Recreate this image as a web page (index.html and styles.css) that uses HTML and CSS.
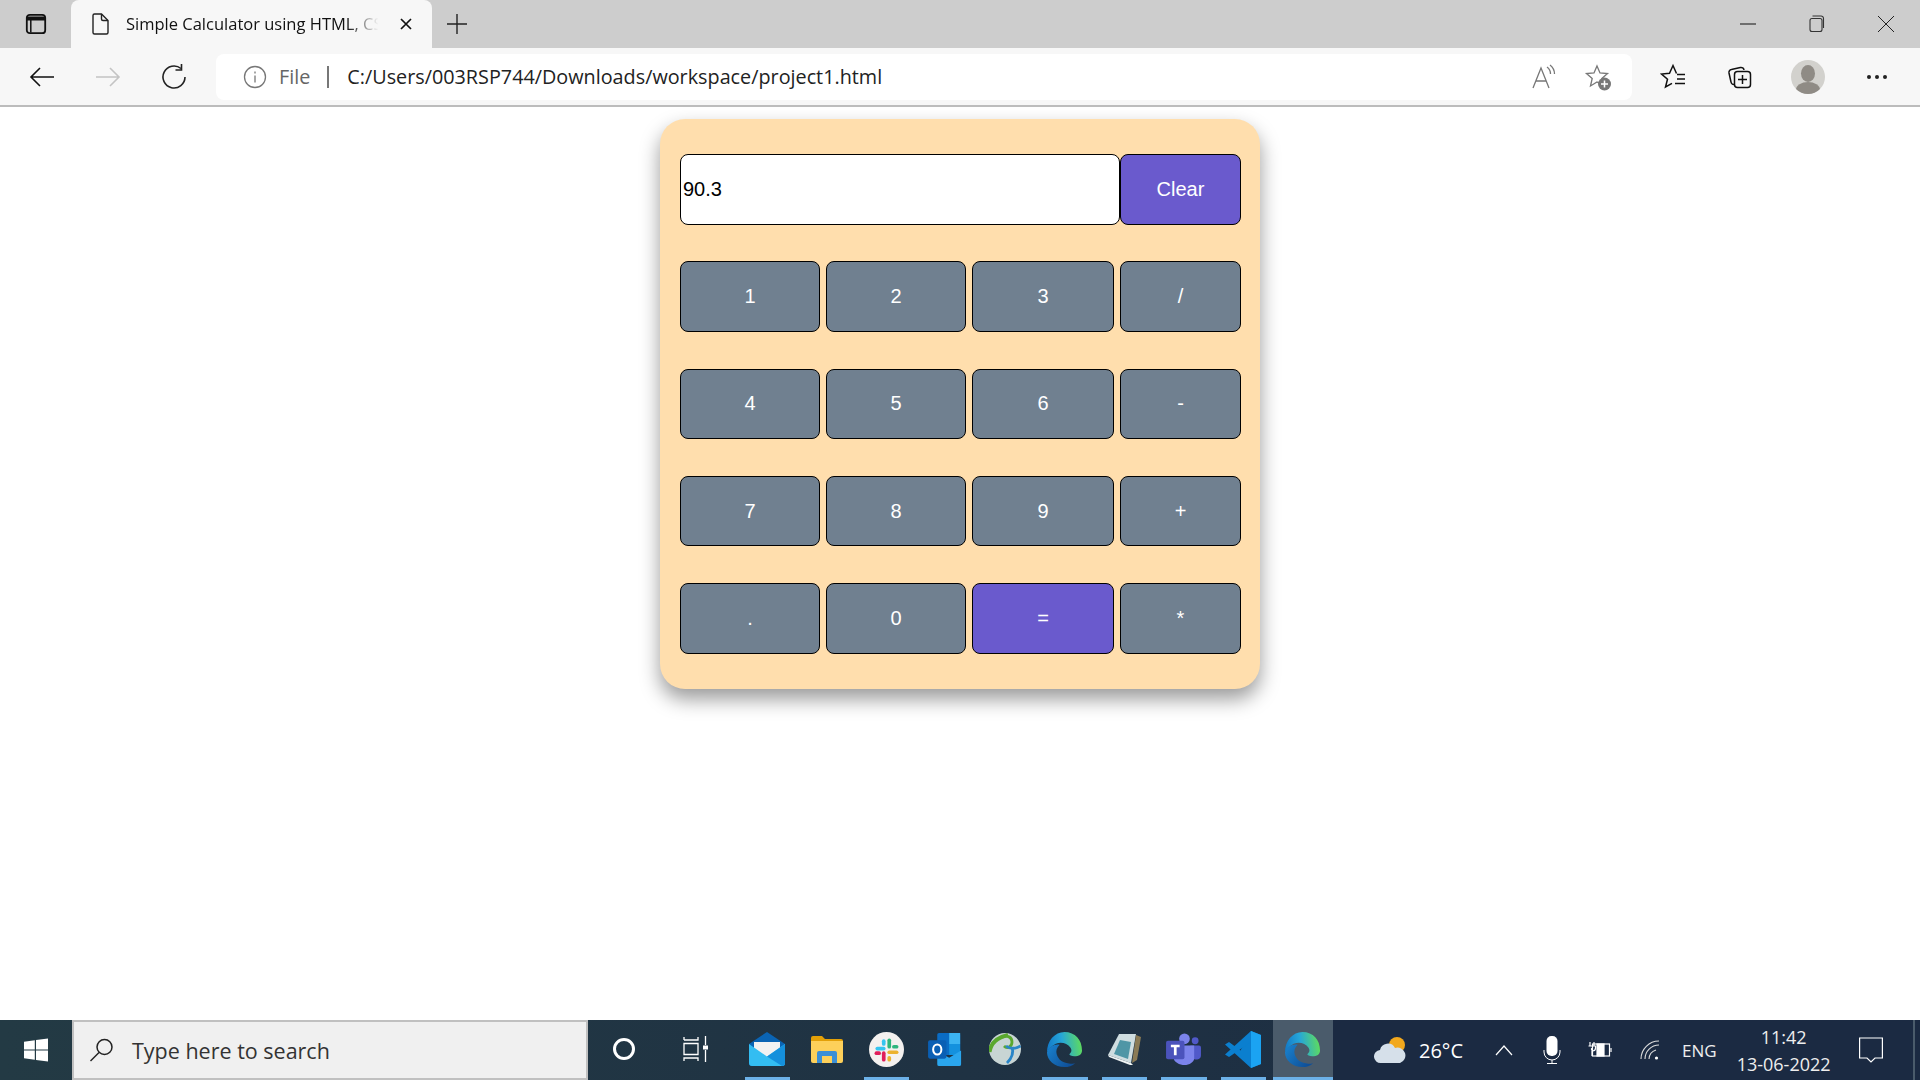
FILE: index.html
```html
<!DOCTYPE html>
<html lang="en">
<head>
    <meta charset="UTF-8">
    <meta name="viewport" content="width=device-width, initial-scale=1.0">
    <title>Simple Calculator using HTML, CSS</title>
    <link rel="stylesheet" href="styles.css">
</head>
<body>
    <svg class="defs" width="0" height="0">
        <defs>
            <linearGradient id="edgeTop" x1="0" y1="0.6" x2="1" y2="0.5">
                <stop offset="0" stop-color="#1279c8"/>
                <stop offset="0.45" stop-color="#26a6d8"/>
                <stop offset="1" stop-color="#5fdc5c"/>
            </linearGradient>
            <linearGradient id="edgeLow" x1="0" y1="0" x2="1" y2="0.6">
                <stop offset="0" stop-color="#1a84d0"/>
                <stop offset="1" stop-color="#0f4f98"/>
            </linearGradient>
        </defs>
    </svg>

    <div class="tabstrip">
        <div class="strip-btn">
            <svg width="24" height="24" viewBox="0 0 24 24" fill="none" stroke="#111" stroke-width="1.800"><rect x="2.800" y="2.800" width="18.400" height="18.400" rx="3"/><path d="M3 6.500h18" stroke-width="4"/><path d="M6.800 8v12.500" stroke-width="1.500"/></svg>
        </div>
        <div class="tab">
            <svg width="20" height="24" viewBox="0 0 20 24" fill="none" stroke="#222" stroke-width="1.400"><path d="M3 3.500a1.500 1.500 0 0 1 1.500-1.500h7L18 8.500v12a1.500 1.500 0 0 1-1.500 1.500h-12A1.500 1.500 0 0 1 3 20.500z"/><path d="M11.500 2v5a1.500 1.500 0 0 0 1.500 1.500h5"/></svg>
            <span class="tab-title">Simple Calculator using HTML, CSS</span>
            <svg class="tab-close" width="14" height="14" viewBox="0 0 14 14" stroke="#111" stroke-width="1.700"><path d="M2 2l10 10M12 2L2 12"/></svg>
        </div>
        <div class="strip-btn new-tab">
            <svg width="22" height="22" viewBox="0 0 22 22" stroke="#222" stroke-width="1.400"><path d="M11 1v20M1 11h20"/></svg>
        </div>
        <div class="window-btns">
            <svg width="16" height="16" viewBox="0 0 16 16" stroke="#222" stroke-width="1.100"><path d="M0 8h16"/></svg>
            <svg width="16" height="18" viewBox="0 0 16 18" fill="none" stroke="#333" stroke-width="1.100"><rect x="1" y="3.500" width="12" height="13" rx="2"/><path d="M3.500 1h8.500a2.500 2.500 0 0 1 2.500 2.500V13"/></svg>
            <svg width="16" height="16" viewBox="0 0 16 16" stroke="#222" stroke-width="1"><path d="M0 0l16 16M16 0L0 16"/></svg>
        </div>
    </div>

    <div class="toolbar">
        <svg class="nav-icon" width="28" height="24" viewBox="0 0 28 24" fill="none" stroke="#111" stroke-width="1.600"><path d="M26 12H3M12 3l-9 9 9 9"/></svg>
        <svg class="nav-icon" width="28" height="24" viewBox="0 0 28 24" fill="none" stroke="#c4c4c4" stroke-width="1.600"><path d="M2 12h23M16 3l9 9-9 9"/></svg>
        <svg class="nav-icon" width="28" height="28" viewBox="0 0 28 28" fill="none" stroke="#222" stroke-width="1.600"><path d="M21 5.500A11 11 0 1 0 25 14"/><path d="M21.500 1v6h-6"/></svg>
        <div class="address">
            <svg width="24" height="24" viewBox="0 0 24 24" fill="none" stroke="#777" stroke-width="1.300"><circle cx="12" cy="12" r="10.500"/><path d="M12 10.500v7M12 6.500v2"/></svg>
            <span class="addr-file">File</span>
            <span class="addr-sep"></span>
            <span class="addr-url">C:/Users/003RSP744/Downloads/workspace/project1.html</span>
            <svg class="addr-read" width="26" height="26" viewBox="0 0 26 26" fill="none" stroke="#777" stroke-width="1.300"><path d="M2 24L10 4l8 20M5 17h10"/><path d="M16 3q3.500 2.500 3.500 7M19 1q4.500 3.500 4.500 9"/></svg>
            <svg class="addr-fav" width="28" height="28" viewBox="0 0 28 28"><path d="M13 3l3 7 7.500.600-5.700 4.900 1.700 7.300L13 19l-6.500 4 1.700-7.500L2.500 10.600l7.500-.600z" fill="none" stroke="#777" stroke-width="1.300"/><circle cx="20.500" cy="21" r="6.500" fill="#777"/><path d="M20.500 17.500v7M17 21h7" stroke="#fff" stroke-width="1.500"/></svg>
        </div>
        <svg class="tool-icon" width="28" height="28" viewBox="0 0 28 28" fill="none" stroke="#111" stroke-width="1.500"><path d="M16.500 10.500L13 2.500l-3.500 7.700-8 .800 6 5.300L5.500 24l6.500-3.700"/><path d="M17 11.500h8M17 16h8M15 20.500h10"/></svg>
        <svg class="tool-icon" width="28" height="28" viewBox="0 0 28 28" fill="none" stroke="#111" stroke-width="1.500"><path d="M8 21.500A3 3 0 0 1 5 19l-2-9a3 3 0 0 1 2.400-3.500l9-2A3 3 0 0 1 18 7"/><rect x="8.500" y="8.500" width="16" height="16" rx="3"/><path d="M16.500 12v9M12 16.500h9"/></svg>
        <div class="avatar"><span class="avatar-head"></span><span class="avatar-body"></span></div>
        <div class="dots"><span></span><span></span><span></span></div>
    </div>

    <main class="page">
        <div class="calculator">
            <div class="display-row">
                <input class="display" type="text" value="90.3">
                <button class="key key-accent key-clear">Clear</button>
            </div>
            <div class="keypad">
                <button class="key">1</button>
                <button class="key">2</button>
                <button class="key">3</button>
                <button class="key">/</button>
                <button class="key">4</button>
                <button class="key">5</button>
                <button class="key">6</button>
                <button class="key">-</button>
                <button class="key">7</button>
                <button class="key">8</button>
                <button class="key">9</button>
                <button class="key">+</button>
                <button class="key">.</button>
                <button class="key">0</button>
                <button class="key key-accent">=</button>
                <button class="key">*</button>
            </div>
        </div>
    </main>

    <div class="taskbar">
        <div class="start">
            <svg width="24" height="24" viewBox="0 0 24 24" fill="#fff"><path d="M0 3.800l10.800-1.500v9.100H0zM12 2.100L24 .400v11H12zM0 12.600h10.800v9.100L0 20.200zM12 12.600h12v11l-12-1.700z"/></svg>
        </div>
        <div class="search">
            <svg width="26" height="26" viewBox="0 0 26 26" fill="none" stroke="#222" stroke-width="1.500"><circle cx="15.500" cy="10" r="7.500"/><path d="M10 15.500L1.500 24"/></svg>
            <span>Type here to search</span>
        </div>
        <div class="slot slot-cortana">
            <svg width="24" height="24" viewBox="0 0 24 24" fill="none" stroke="#fff" stroke-width="3"><circle cx="12" cy="12" r="9.500"/></svg>
        </div>
        <div class="slot slot-tasks">
            <svg width="26" height="26" viewBox="0 0 26 26" fill="none" stroke="#fff" stroke-width="1.300"><path d="M1 4h14V1M1 4V1M1 7.500h14v11H1zM1 25v-3h14v3M22.500 0v9M22.500 14v12"/><rect x="20" y="9.500" width="5" height="4" fill="#fff" stroke="none"/></svg>
        </div>

        <div class="slot pinned">
            <svg width="36" height="34" viewBox="0 0 36 34"><path d="M0 12L18 0l18 12v19a3 3 0 0 1-3 3H3a3 3 0 0 1-3-3z" fill="#0a64b4"/><path d="M5 10h26v10l-13 6-13-6z" fill="#f2f2f2"/><path d="M0 12l18 12.500L36 12v19a3 3 0 0 1-3 3H3a3 3 0 0 1-3-3z" fill="#33bdf2"/><path d="M36 31V12L18 24.500 33 34a3 3 0 0 0 3-3z" fill="#1590dc"/></svg>
        </div>
        <div class="slot">
            <svg width="32" height="27" viewBox="0 0 32 27"><path d="M0 2a2 2 0 0 1 2-2h9l3 3h16a2 2 0 0 1 2 2v3H0z" fill="#e3a008"/><path d="M0 5h32v20a2 2 0 0 1-2 2H2a2 2 0 0 1-2-2z" fill="#fdd05a"/><path d="M6 27V17a2 2 0 0 1 2-2h16a2 2 0 0 1 2 2v10h-5v-7H11v7z" fill="#3b8fd6"/></svg>
        </div>
        <div class="slot pinned">
            <svg width="35" height="35" viewBox="0 0 38 38"><circle cx="19" cy="19" r="19" fill="#f4f1ef"/><rect x="7" y="16" width="11" height="4" rx="2" fill="#36c5f0"/><rect x="14" y="8" width="4" height="7" rx="2" fill="#36c5f0"/><rect x="20" y="7" width="4" height="11" rx="2" fill="#2eb67d"/><rect x="25" y="14" width="7" height="4" rx="2" fill="#2eb67d"/><rect x="20" y="20" width="12" height="4" rx="2" fill="#ecb22e"/><rect x="20" y="26" width="4" height="6" rx="2" fill="#ecb22e"/><rect x="14" y="21" width="4" height="11" rx="2" fill="#e01e5a"/><rect x="6" y="21" width="7" height="4" rx="2" fill="#e01e5a"/></svg>
        </div>
        <div class="slot">
            <svg width="35" height="33" viewBox="0 0 38 36"><rect x="10" y="0" width="25" height="24" rx="2" fill="#0a6cc4"/><rect x="23" y="0" width="12" height="12" fill="#3cb4f2"/><rect x="23" y="12" width="12" height="12" fill="#1491de"/><path d="M10 20l13 7 13-8v15a2 2 0 0 1-2 2H12a2 2 0 0 1-2-2z" fill="#2aa6ee"/><rect x="0" y="8" width="20" height="20" rx="2" fill="#0a5fb4"/><ellipse cx="10" cy="18" rx="4.500" ry="5.500" fill="none" stroke="#fff" stroke-width="2.200"/></svg>
        </div>
        <div class="slot">
            <svg width="32" height="32" viewBox="0 0 32 32"><circle cx="16" cy="16" r="16" fill="#c8d5d4"/><path d="M.500 19C2 9 10 4 19 2" fill="none" stroke="#5aa82f" stroke-width="4"/><path d="M14 4c4-2 9 0 9 5 0 5-5 7-8 4" fill="none" stroke="#5aa82f" stroke-width="2.800"/><path d="M17 13c5 4 11 2 14.500 0" fill="none" stroke="#2a86c8" stroke-width="2.800"/><path d="M23 14c2 6-1 12-5 16" fill="none" stroke="#2a86c8" stroke-width="2.800"/></svg>
        </div>
        <div class="slot pinned">
            <svg width="37" height="37" viewBox="0 0 38 38"><path d="M19 1c11 0 18 8 18 19 0 4-3 6-8 6-3 0-5-1-5-2 2-2 3-4 1-7C22 12 15 11 10 13c-4 2-7 5-9 9C1 10 9 1 19 1z" fill="url(#edgeTop)"/><path d="M1 22c2-6 8-9 13-8-3 3-4 6-3 10 2 7 9 11 19 9-3 3-7 4-11 4C9 37 1 30 1 22z" fill="url(#edgeLow)"/></svg>
        </div>
        <div class="slot pinned">
            <svg width="33" height="31" viewBox="0 0 33 31"><path d="M11 0h17l-5 29L0 21z" fill="#cfdde0"/><path d="M28 1l5 2-4 23-5 3z" fill="#8a7a55"/><path d="M6 20l6-14 11 2-3 17z" fill="#4f96a6"/><path d="M0 21l23 8 2 2-3 0L1 23z" fill="#f0f4f4"/></svg>
        </div>
        <div class="slot pinned">
            <svg width="35" height="32" viewBox="0 0 36 33"><circle cx="19" cy="6" r="5.500" fill="#7b83eb"/><circle cx="30" cy="8" r="3.500" fill="#5059c9"/><path d="M25 13h9a2 2 0 0 1 2 2v8c0 4-4 5-7 4l-4-3z" fill="#5059c9"/><path d="M8 13h21v13c0 4-5 7-10 7S8 30 8 26z" fill="#7b83eb"/><rect x="0" y="8" width="19" height="19" rx="2" fill="#4b53bc"/><path d="M5 12h9v2.600h-3.100V23H8.100v-8.400H5z" fill="#fff"/></svg>
        </div>
        <div class="slot pinned">
            <svg width="36" height="37" viewBox="0 0 36 37"><path d="M26 0L36 4v29l-10 4L0 13.500 4 11l11.500 8.500z" fill="#0b7fcf"/><path d="M0 23.500L4 26l22-15V0z" fill="#0b7fcf"/><path d="M26 0v37l10-4V4z" fill="#1ba3f2"/></svg>
        </div>
        <div class="slot slot-active pinned">
            <svg width="37" height="37" viewBox="0 0 38 38"><path d="M19 1c11 0 18 8 18 19 0 4-3 6-8 6-3 0-5-1-5-2 2-2 3-4 1-7C22 12 15 11 10 13c-4 2-7 5-9 9C1 10 9 1 19 1z" fill="url(#edgeTop)"/><path d="M1 22c2-6 8-9 13-8-3 3-4 6-3 10 2 7 9 11 19 9-3 3-7 4-11 4C9 37 1 30 1 22z" fill="url(#edgeLow)"/></svg>
        </div>

        <div class="tray">
            <div class="weather">
                <svg width="32" height="28" viewBox="0 0 32 28"><circle cx="23" cy="9" r="8" fill="#f2a81d"/><path d="M7 27a6.500 6.500 0 0 1-1-13 8 8 0 0 1 15-2 7 7 0 0 1 5 15z" fill="#d6e0ea"/></svg>
                <span>26°C</span>
            </div>
            <svg class="tray-chevron" width="18" height="12" viewBox="0 0 18 12" fill="none" stroke="#fff" stroke-width="1.200"><path d="M1 11l8-9 8 9"/></svg>
            <svg class="tray-mic" width="18" height="28" viewBox="0 0 18 28" fill="#fff"><rect x="3.500" y="0" width="11" height="20" rx="5"/><path d="M1 14v2a8 8 0 0 0 16 0v-2M9 24v3M4 27.500h10" fill="none" stroke="#fff" stroke-width="1"/></svg>
            <svg class="tray-battery" width="24" height="18" viewBox="0 0 24 18" fill="none" stroke="#fff" stroke-width="1.200"><rect x="4.500" y="3" width="17" height="12"/><rect x="9" y="3" width="7" height="12" fill="#fff"/><path d="M23 7v4"/><path d="M2 1v4M6 1v4M.500 5h7v2a3 3 0 0 1-3 3 3 3 0 0 1-1-3M4 10v5"/></svg>
            <svg class="tray-wifi" width="20" height="20" viewBox="0 0 20 20" fill="none" stroke="#ddd" stroke-width="1.100"><path d="M1 19A18 18 0 0 1 19 1M5 19A14 14 0 0 1 19 5M9 19A10 10 0 0 1 16 10"/><circle cx="16.500" cy="18" r="1.600" fill="#fff" stroke="none"/></svg>
            <span class="tray-lang">ENG</span>
            <div class="clock">
                <span>11:42</span>
                <span>13-06-2022</span>
            </div>
            <svg class="tray-notify" width="24" height="26" viewBox="0 0 24 26" fill="none" stroke="#fff" stroke-width="1.200"><path d="M.600 1h22.800v20H16l-4 4-4-4H.600z"/></svg>
            <div class="show-desktop"></div>
        </div>
    </div>
</body>
</html>
```

FILE: styles.css
```css
* {
    box-sizing: border-box;
}

body {
    margin: 0;
    height: 100vh;
    display: flex;
    flex-direction: column;
    overflow: hidden;
    background-color: #fff;
    font-family: "Open Sans", sans-serif;
    color: #111;
}

.defs {
    display: block;
    flex: none;
}

/* browser chrome */
.tabstrip {
    height: 48px;
    flex: none;
    display: flex;
    align-items: center;
    background-color: #cdcdcd;
}

.strip-btn {
    width: 71px;
    height: 48px;
    display: flex;
    align-items: center;
    justify-content: center;
}

.new-tab {
    width: 50px;
    margin-left: 0;
}

.tab {
    width: 361px;
    height: 48px;
    display: flex;
    align-items: center;
    padding: 0 19px 0 19px;
    background-color: #f7f7f7;
    border-radius: 8px 8px 0 0;
}

.tab-title {
    flex: 1;
    margin-left: 16px;
    padding-bottom: 2px;
    font-size: 16.500px;
    white-space: nowrap;
    overflow: hidden;
    -webkit-mask-image: linear-gradient(to right, #000 84%, transparent 96%);
    mask-image: linear-gradient(to right, #000 84%, transparent 96%);
}

.tab-close {
    margin-left: 10px;
    flex: none;
}

.window-btns {
    margin-left: auto;
    display: flex;
    align-items: center;
    gap: 53px;
    padding-right: 26px;
}

.toolbar {
    height: 59px;
    flex: none;
    display: flex;
    align-items: center;
    padding-left: 28px;
    background-color: #f7f7f7;
    border-bottom: 2px solid #bcbcbc;
}

.nav-icon {
    flex: none;
    margin-right: 38px;
}

.nav-icon:nth-child(3) {
    margin-right: 28px;
}

.address {
    width: 1416px;
    height: 46px;
    flex: none;
    display: flex;
    align-items: center;
    padding: 0 20px 0 27px;
    background-color: #fff;
    border-radius: 8px;
}

.addr-file {
    margin-left: 12px;
    font-size: 19.800px;
    color: #666;
}

.addr-sep {
    width: 2px;
    height: 22px;
    margin: 0 18px 0 17px;
    background-color: #777;
}

.addr-url {
    font-size: 19.800px;
    color: #222;
}

.addr-read {
    margin-left: auto;
}

.addr-fav {
    margin-left: 27px;
}

.tool-icon {
    flex: none;
    margin-left: 28px;
}

.tool-icon + .tool-icon {
    margin-left: 38px;
}

.avatar {
    position: relative;
    width: 34px;
    height: 34px;
    flex: none;
    margin-left: 37px;
    overflow: hidden;
    border-radius: 50%;
    background-color: #d2d1cd;
}

.avatar-head {
    position: absolute;
    left: 10px;
    top: 5px;
    width: 14px;
    height: 17px;
    border-radius: 50%;
    background-color: #8f8b85;
}

.avatar-body {
    position: absolute;
    left: 5px;
    top: 22px;
    width: 24px;
    height: 16px;
    border-radius: 50%;
    background-color: #8f8b85;
}

.dots {
    display: flex;
    gap: 4px;
    margin-left: 42px;
}

.dots span {
    width: 4px;
    height: 4px;
    border-radius: 50%;
    background-color: #222;
}

/* calculator */
.page {
    flex: 1;
    display: flex;
    justify-content: center;
    align-items: flex-start;
    padding-top: 12px;
    background-color: #fff;
}

.calculator {
    width: 600px;
    height: 570px;
    padding: 35px 20px;
    background-color: #ffdead;
    border-radius: 25px;
    box-shadow: 0 10px 20px rgba(0, 0, 0, 0.4);
}

.display-row {
    display: flex;
    height: 70.500px;
    margin-bottom: 36.800px;
}

.display {
    width: 440px;
    height: 70.500px;
    flex: none;
    padding: 0 2px;
    font-family: "Liberation Sans", Arial, sans-serif;
    font-size: 20px;
    color: #000;
    background-color: #fff;
    border: 1px solid #000;
    border-radius: 8px;
    outline: none;
}

.keypad {
    display: grid;
    grid-template-columns: 140px 140px 142px 121px;
    grid-auto-rows: 70.500px;
    column-gap: 6px;
    row-gap: 36.800px;
}

.key {
    padding: 0;
    font-family: "Liberation Sans", Arial, sans-serif;
    font-size: 20px;
    color: #fff;
    background-color: #708090;
    border: 1px solid #000;
    border-radius: 8px;
}

.key-accent {
    background-color: #6a5acd;
}

.key-clear {
    width: 121px;
    flex: none;
}

/* windows taskbar */
.taskbar {
    height: 60px;
    flex: none;
    display: flex;
    align-items: stretch;
    background: linear-gradient(to right, #233a44, #1b2a42);
    color: #fff;
}

.start {
    width: 72px;
    display: flex;
    align-items: center;
    justify-content: center;
}

.search {
    width: 516px;
    display: flex;
    align-items: center;
    gap: 17px;
    padding-left: 15px;
    font-size: 21.500px;
    color: #333;
    background-color: #f0f0f0;
    border: 2px solid #c0c0c0;
}

.slot {
    width: 59.500px;
    flex: none;
    position: relative;
    display: flex;
    align-items: center;
    justify-content: center;
    padding-bottom: 2px;
}

.slot-cortana {
    width: 71.500px;
}

.slot-tasks {
    width: 73px;
    margin-right: 5px;
}

.pinned::after {
    content: "";
    position: absolute;
    left: 7px;
    right: 7px;
    bottom: 0;
    height: 3px;
    background-color: #6cb1e8;
}

.slot-active {
    background-color: #4a5b6b;
}

.slot-active::after {
    left: 0;
    right: 0;
}

.tray {
    flex: 1;
    display: flex;
    align-items: center;
    padding-left: 41.500px;
    background-color: #1b2a42;
}

.weather {
    display: flex;
    align-items: center;
    gap: 13px;
    font-size: 20px;
}

.tray-chevron {
    margin-left: 32px;
}

.tray-mic {
    margin-left: 30px;
}

.tray-battery {
    margin-left: 27px;
}

.tray-wifi {
    margin-left: 28px;
}

.tray-lang {
    margin-left: 22px;
    font-size: 17px;
    color: #eee;
}

.clock {
    display: flex;
    flex-direction: column;
    align-items: center;
    gap: 5px;
    margin-left: 20px;
    font-size: 18px;
    line-height: 22px;
    color: #eee;
}

.tray-notify {
    margin-left: 28px;
}

.show-desktop {
    width: 2px;
    height: 100%;
    margin-left: 30px;
    background-color: #4a5b6b;
}
```
